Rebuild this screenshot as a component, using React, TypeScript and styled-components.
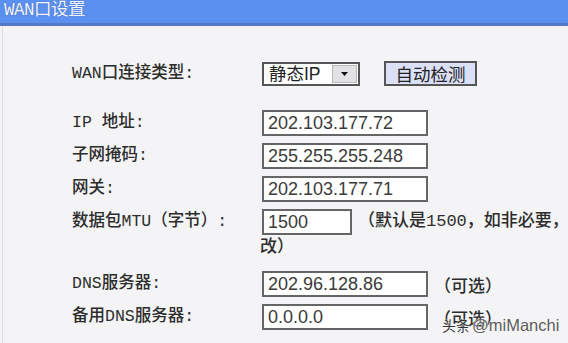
import { createGlobalStyle, styled } from 'styled-components'

const GlobalStyle = createGlobalStyle`
  html, body {
    margin: 0;
    padding: 0;
    background: #f4f4f6;
    overflow: hidden;
  }
`

const Frame = styled.div`
  position: relative;
  width: 568px;
  height: 343px;
  overflow: hidden;
  background: #f4f4f6;
`

const TitleBar = styled.div`
  height: 23px;
  background: #5b8ff0;
  border-bottom: 3px solid #5379c6;
  padding-left: 4px;
  color: #f4f6ff;
  font-family: 'Liberation Mono', 'Noto Sans CJK SC', monospace;
  font-size: 17.5px;
  line-height: 21px;
  text-shadow: 0 0 1px #3a5ea8;
  letter-spacing: -0.5px;
`

const Panel = styled.div`
  height: 317px;
  margin-left: 2px;
  border-left: 1px solid #dcdcdf;
  padding: 35px 0 0 69px;
  box-sizing: border-box;
`

const Form = styled.div`
  display: grid;
  grid-template-columns: 188px 370px;
  row-gap: 7px;
`

const Label = styled.div`
  font-family: 'Liberation Mono', 'Noto Sans CJK SC', monospace;
  font-size: 16.5px;
  font-weight: 500;
  line-height: 26px;
  color: #2c2c2c;
  white-space: nowrap;
`

const Cell = styled.div<{ $gapAfter?: number }>`
  display: flex;
  align-items: center;
  margin-bottom: ${(p) => p.$gapAfter ?? 0}px;
`

const WrapCell = styled.div<{ $gapAfter?: number }>`
  line-height: 24px;
  margin-bottom: ${(p) => p.$gapAfter ?? 0}px;
`

const TextBox = styled.input<{ $width: number }>`
  box-sizing: border-box;
  width: ${(p) => p.$width}px;
  height: 26px;
  margin: 0 0 0 2px;
  padding: 0 4px;
  border: 2px solid #666;
  background: #fff;
  color: #3a3a3a;
  font-family: 'Liberation Sans', Arial, sans-serif;
  font-size: 18px;
  vertical-align: top;
  outline: none;
`

const Note = styled.span`
  margin-left: 6px;
  font-family: 'Liberation Mono', 'Noto Sans CJK SC', monospace;
  font-size: 17px;
  font-weight: 500;
  color: #2c2c2c;
`

const SelectBox = styled.div`
  box-sizing: border-box;
  display: flex;
  width: 98px;
  height: 24px;
  margin-left: 2px;
  border: 2px solid #555;
  background: #fff;
`

const SelectText = styled.div`
  flex: 1;
  padding-left: 5px;
  font-family: 'Liberation Sans', 'Noto Sans CJK SC', sans-serif;
  font-size: 17.5px;
  line-height: 20px;
  color: #222;
`

const DropButton = styled.div`
  width: 23px;
  margin: 1px;
  display: flex;
  align-items: center;
  justify-content: center;
  background: #e2e2e4;
  border: 1px solid #b8b8bc;
`

const ActionButton = styled.button`
  box-sizing: border-box;
  width: 93px;
  height: 25px;
  margin-left: 24px;
  padding: 0;
  border: 2px solid #555;
  background: #dcdff8;
  color: #222;
  font-family: 'Noto Sans CJK SC', sans-serif;
  font-size: 17.5px;
  line-height: 20px;
`

const Watermark = styled.div`
  position: absolute;
  left: 442px;
  top: 315px;
  font-family: 'Liberation Sans', 'Noto Sans CJK SC', sans-serif;
  font-size: 16.5px;
  color: #5a5a5a;
  text-shadow: 0 0 2px #fff, 0 0 1px #fff;
  white-space: nowrap;
`

const WatermarkCjk = styled.span`
  font-size: 14px;
  color: #333;
  margin-right: 2px;
`

function Arrow() {
  return (
    <svg width="9" height="6" viewBox="0 0 9 6">
      <path d="M1 1h7L4.5 5z" fill="#111" />
    </svg>
  )
}

const fields = [
  { label: 'IP 地址:', value: '202.103.177.72' },
  { label: '子网掩码:', value: '255.255.255.248' },
  { label: '网关:', value: '202.103.177.71' },
]

export default function App() {
  return (
    <Frame>
      <GlobalStyle />
      <TitleBar>WAN口设置</TitleBar>
      <Panel>
        <Form>
          <Label>WAN口连接类型:</Label>
          <Cell $gapAfter={17}>
            <SelectBox>
              <SelectText>静态IP</SelectText>
              <DropButton>
                <Arrow />
              </DropButton>
            </SelectBox>
            <ActionButton>自动检测</ActionButton>
          </Cell>

          {fields.map((f) => [
            <Label key={f.label}>{f.label}</Label>,
            <Cell key={f.value}>
              <TextBox $width={166} defaultValue={f.value} readOnly />
            </Cell>,
          ])}

          <Label>数据包MTU（字节）:</Label>
          <WrapCell $gapAfter={4}>
            <TextBox $width={90} defaultValue="1500" readOnly />
            <Note>（默认是1500，如非必要，请勿修改）</Note>
          </WrapCell>

          <Label>DNS服务器:</Label>
          <Cell>
            <TextBox $width={166} defaultValue="202.96.128.86" readOnly />
            <Note>（可选）</Note>
          </Cell>

          <Label>备用DNS服务器:</Label>
          <Cell>
            <TextBox $width={166} defaultValue="0.0.0.0" readOnly />
            <Note>（可选）</Note>
          </Cell>
        </Form>
      </Panel>
      <Watermark>
        <WatermarkCjk>头条</WatermarkCjk>@miManchi
      </Watermark>
    </Frame>
  )
}
